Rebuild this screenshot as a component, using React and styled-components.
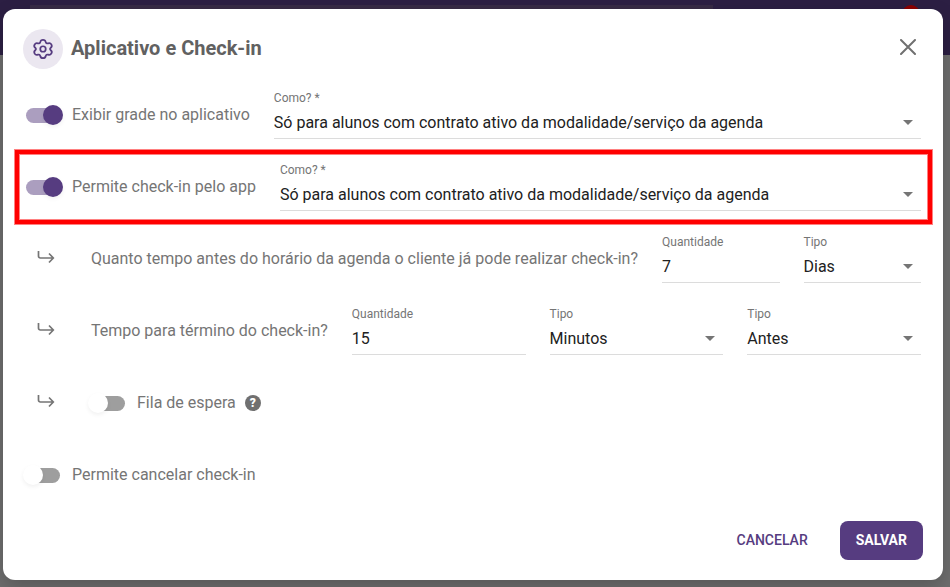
import * as React from 'react';
import styled, { createGlobalStyle } from 'styled-components';

const AUDIENCES = ['Só para alunos com contrato ativo da modalidade/serviço da agenda', 'Para todos os alunos'];
const UNITS = ['Minutos', 'Horas', 'Dias'];
const MOMENTS = ['Antes', 'Depois'];

const Toggle = ({ label, defaultChecked }) => {
  return <ToggleLabel>
    <ToggleInput type="checkbox" role="switch" defaultChecked={defaultChecked} />
    {label}
  </ToggleLabel>;
};

const SelectField = ({ id, label, options, defaultValue }) => {
  return <Field>
    <FieldLabel htmlFor={id}>{label}</FieldLabel>
    <Select id={id} defaultValue={defaultValue || options[0]}>
      {options.map((option) => <option key={option}>{option}</option>)}
    </Select>
    <Caret viewBox="0 0 10 5" aria-hidden="true"><path d="M0 0h10L5 5z" /></Caret>
  </Field>;
};

const NumberField = ({ id, label, defaultValue }) => {
  return <Field>
    <FieldLabel htmlFor={id}>{label}</FieldLabel>
    <Input id={id} inputMode="numeric" defaultValue={defaultValue} />
  </Field>;
};

const SubArrow = () => {
  return <ArrowIcon viewBox="0 0 18 14" aria-hidden="true">
    <path d="M1.5 1v5.2a1.8 1.8 0 0 0 1.8 1.8H16M12 3.5L16.3 8 12 12.5" />
  </ArrowIcon>;
};

const App = () => {
  return <Page>
    <GlobalStyle />
    <TopBar><TopSearch /><Badge /></TopBar>
    <Dialog role="dialog" aria-labelledby="dialog-title">
      <Header>
        <IconCircle>
          <GearIcon viewBox="0 0 24 24" aria-hidden="true">
            <path d="M9 4.4C9.300 2.800 10.200 2 12 2s2.700.8 3 2.400c.3 1.400 1.300 1.900 2.600 1.400 1.500-.6 2.700-.2 3.500 1.200s.6 2.600-.6 3.600c-1.100.9-1.100 1.900 0 2.800 1.200 1 1.500 2.200.6 3.600s-2 1.800-3.500 1.200c-1.300-.5-2.300 0-2.600 1.400C14.700 21.200 13.800 22 12 22s-2.700-.8-3-2.400c-.3-1.400-1.300-1.900-2.600-1.400-1.500.6-2.700.2-3.500-1.200s-.6-2.600.6-3.600c1.100-.9 1.100-1.900 0-2.800-1.200-1-1.500-2.200-.6-3.600s2-1.800 3.500-1.200c1.300.5 2.300 0 2.600-1.400z" />
            <circle cx="12" cy="12" r="3" />
          </GearIcon>
        </IconCircle>
        <Title id="dialog-title">Aplicativo e Check-in</Title>
        <CloseButton type="button" aria-label="Fechar">
          <CloseIcon viewBox="0 0 16 16" aria-hidden="true"><path d="M1 1l14 14M15 1L1 15" /></CloseIcon>
        </CloseButton>
      </Header>

      <Row>
        <Toggle label="Exibir grade no aplicativo" defaultChecked />
        <SelectField id="grade-como" label="Como? *" options={AUDIENCES} />
      </Row>
      <Row $highlighted>
        <Toggle label="Permite check-in pelo app" defaultChecked />
        <SelectField id="checkin-como" label="Como? *" options={AUDIENCES} />
      </Row>
      <Row $nested>
        <SubArrow />
        <Question>Quanto tempo antes do horário da agenda o cliente já pode realizar check-in?</Question>
        <NumberField id="inicio-quantidade" label="Quantidade" defaultValue="7" />
        <SelectField id="inicio-tipo" label="Tipo" options={UNITS} defaultValue="Dias" />
      </Row>
      <Row $nested>
        <SubArrow />
        <Question>Tempo para término do check-in?</Question>
        <NumberField id="termino-quantidade" label="Quantidade" defaultValue="15" />
        <SelectField id="termino-tipo" label="Tipo" options={UNITS} />
        <SelectField id="termino-momento" label="Tipo" options={MOMENTS} />
      </Row>
      <Row $nested>
        <SubArrow />
        <ToggleGroup>
          <Toggle label="Fila de espera" />
          <HelpButton type="button" aria-label="Ajuda">?</HelpButton>
        </ToggleGroup>
      </Row>
      <Row>
        <Toggle label="Permite cancelar check-in" />
      </Row>

      <Footer>
        <Button type="button">Cancelar</Button>
        <Button type="button" $primary>Salvar</Button>
      </Footer>
    </Dialog>
  </Page>;
};

export default App;

const GlobalStyle = createGlobalStyle`
  body {
    margin: 0;
    background: #6e6e6e;
    font-family: Roboto, "Liberation Sans", sans-serif;
  }

  * {
    box-sizing: border-box;
  }

  button, input, select {
    font-family: inherit;
  }
`;

const Page = styled.div`
  position: relative;
  min-height: 100vh;
  padding: 9px 7px 7px 3px;
  background: #6e6e6e;
`;

const TopBar = styled.div`
  position: absolute;
  top: 0;
  left: 0;
  right: 0;
  height: 55px;
  padding: 5px 30px;
  display: flex;
  justify-content: space-between;
  background: #2c1f43;
`;

const TopSearch = styled.div`
  flex: 0 1 683px;
  height: 40px;
  background: #372b45;
`;

const Badge = styled.span`
  width: 18px;
  height: 18px;
  border-radius: 50%;
  background: #8b0000;
`;

const Dialog = styled.main`
  position: relative;
  border-radius: 12px;
  background: #ffffff;
  box-shadow: 0 8px 20px rgba(0, 0, 0, 0.2);
`;

const Header = styled.header`
  display: flex;
  align-items: center;
  gap: 8px;
  padding: 20px 20px 10px;
`;

const IconCircle = styled.span`
  width: 40px;
  height: 40px;
  display: flex;
  align-items: center;
  justify-content: center;
  border-radius: 50%;
  background: #ebe7f0;
`;

const GearIcon = styled.svg`
  width: 22px;
  height: 22px;
  fill: none;
  stroke: #563c80;
  stroke-width: 1.9;
`;

const Title = styled.h1`
  flex: 1;
  margin: 0;
  padding-bottom: 2px;
  font-size: 20px;
  line-height: 24px;
  font-weight: 700;
  color: #616161;
`;

const CloseButton = styled.button`
  display: flex;
  padding: 5px 7px 9px;
  border: 0;
  background: none;
  cursor: pointer;
`;

const CloseIcon = styled.svg`
  width: 16px;
  height: 16px;
  stroke: #707070;
  stroke-width: 2;
  stroke-linecap: round;
`;

const Row = styled.div`
  height: 72px;
  margin: 0 12px 0 13px;
  padding: 0 10px;
  padding-left: ${({ $nested }) => $nested ? 21 : 10}px;
  display: flex;
  align-items: center;
  gap: 24px;
  outline: ${({ $highlighted }) => $highlighted ? '4px solid #ff0000' : 'none'};
  outline-offset: -3px;
  box-shadow: ${({ $highlighted }) => $highlighted ? '0 0 0 2px #ff8080, inset 0 0 0 4px #ff8080' : 'none'};
`;

const ToggleLabel = styled.label`
  flex: none;
  display: flex;
  align-items: center;
  gap: 9px;
  font-size: 16px;
  line-height: 24px;
  color: #757575;
  cursor: pointer;
`;

const ToggleInput = styled.input`
  appearance: none;
  position: relative;
  width: 34px;
  height: 15px;
  margin: 0 3px 0 0;
  border-radius: 8px;
  background: #9e9e9e;
  cursor: pointer;

  &::before {
    content: '';
    position: absolute;
    top: -3px;
    left: -3px;
    width: 20px;
    height: 20px;
    border-radius: 50%;
    background: #ffffff;
    box-shadow: 0 2px 4px rgba(0, 0, 0, 0.06);
  }

  &:checked {
    background: #ab9ebf;
  }

  &:checked::before {
    left: 17px;
    background: #563c80;
  }
`;

const ToggleGroup = styled.div`
  display: flex;
  align-items: center;
  gap: 9px;
`;

const HelpButton = styled.button`
  width: 16px;
  height: 16px;
  padding: 0;
  border: 0;
  border-radius: 50%;
  background: #707070;
  color: #ffffff;
  font-size: 12px;
  line-height: 16px;
  font-weight: 900;
  cursor: pointer;
`;

const ArrowIcon = styled.svg`
  flex: none;
  width: 18px;
  height: 14px;
  margin: 0 12px 4px 0;
  fill: none;
  stroke: #757575;
  stroke-width: 1.7;
`;

const Question = styled.span`
  flex: none;
  font-size: 16px;
  line-height: 24px;
  color: #757575;
`;

const Field = styled.div`
  position: relative;
  flex: 1 1 0;
  min-width: 0;
  padding-bottom: 2px;
`;

const FieldLabel = styled.label`
  display: block;
  font-size: 12px;
  line-height: 16px;
  color: #757575;
`;

const Input = styled.input`
  display: block;
  width: 100%;
  height: 33px;
  padding: 2px 0 0;
  border: 0;
  border-bottom: 1px solid #dcdcdc;
  border-radius: 0;
  background: none;
  font-size: 16px;
  color: #212121;
  outline: none;
`;

const Select = styled(Input).attrs({ as: 'select' })`
  appearance: none;
  padding-right: 24px;
`;

const Caret = styled.svg`
  position: absolute;
  right: 8px;
  bottom: 16px;
  width: 10px;
  height: 5px;
  fill: #757575;
  pointer-events: none;
`;

const Footer = styled.footer`
  display: flex;
  justify-content: flex-end;
  gap: 16px;
  padding: 10px 20px 20px;
`;

const Button = styled.button`
  height: 39px;
  padding: 0 16px 2px;
  border: 0;
  border-radius: 8px;
  background: ${({ $primary }) => $primary ? '#563c80' : 'transparent'};
  color: ${({ $primary }) => $primary ? '#ffffff' : '#563c80'};
  font-size: 14px;
  font-weight: ${({ $primary }) => $primary ? 700 : 500};
  text-transform: uppercase;
  cursor: pointer;
`;
